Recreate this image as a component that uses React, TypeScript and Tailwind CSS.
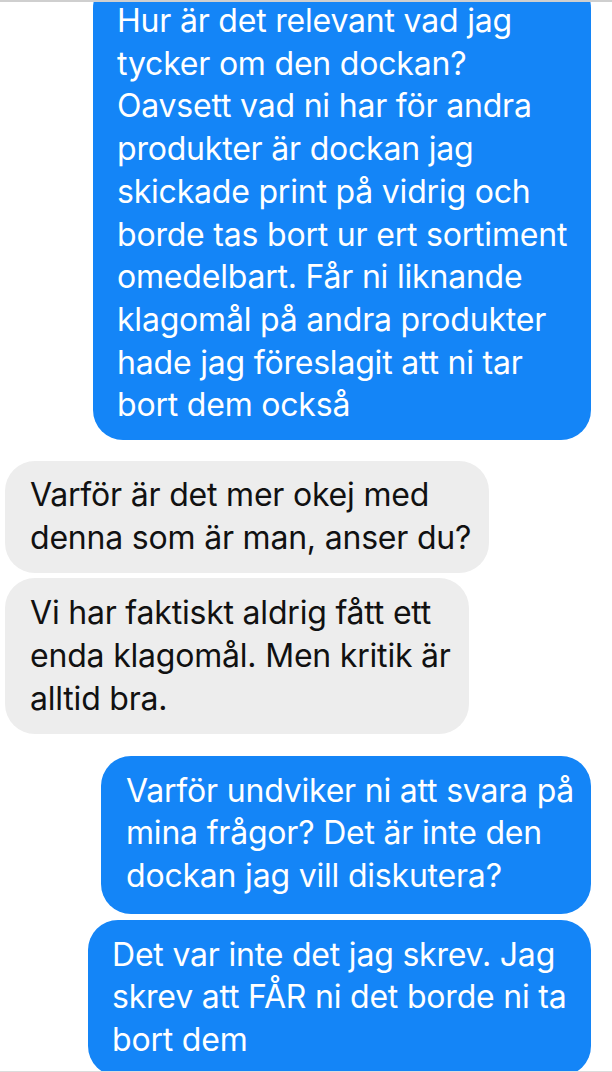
import React from 'react';

type Msg = { from: 'me' | 'them'; lines: string[]; box: string };

const messages: Msg[] = [
  {
    from: 'me',
    box: 'w-[498px] mt-[-24px] pt-[22px] pb-[13px] pl-6',
    lines: [
      'Hur är det relevant vad jag',
      'tycker om den dockan?',
      'Oavsett vad ni har för andra',
      'produkter är dockan jag',
      'skickade print på vidrig och',
      'borde tas bort ur ert sortiment',
      'omedelbart. Får ni liknande',
      'klagomål på andra produkter',
      'hade jag föreslagit att ni tar',
      'bort dem också',
    ],
  },
  {
    from: 'them',
    box: 'w-[484px] mt-[21px] pt-[13px] pb-[14px] pl-[25px]',
    lines: ['Varför är det mer okej med', 'denna som är man, anser du?'],
  },
  {
    from: 'them',
    box: 'w-[464px] mt-[5px] pt-[14px] pb-[13px] pl-[25px]',
    lines: ['Vi har faktiskt aldrig fått ett', 'enda klagomål. Men kritik är', 'alltid bra.'],
  },
  {
    from: 'me',
    box: 'w-[490px] mt-[22px] pt-[14px] pb-[16px] pl-[25px]',
    lines: ['Varför undviker ni att svara på', 'mina frågor? Det är inte den', 'dockan jag vill diskutera?'],
  },
  {
    from: 'me',
    box: 'w-[503px] mt-[6px] pt-[14px] pb-[14px] pl-6',
    lines: ['Det var inte det jag skrev. Jag', 'skrev att FÅR ni det borde ni ta', 'bort dem'],
  },
];

const Bubble = ({ msg }: { msg: Msg }) => {
  const mine = msg.from === 'me';
  return (
    <div className={mine ? 'flex justify-end pr-[21px]' : 'flex justify-start pl-[5px]'}>
      <div
        className={
          (mine ? 'bg-[#1485f7] text-white ' : 'bg-[#ededed] text-[#111111] ') +
          'rounded-[30px] text-[32px] leading-[42.7px] tracking-[-0.2px] ' +
          msg.box
        }
      >
        {msg.lines.map((l, i) => (
          <div key={i} className="whitespace-nowrap">
            {l}
          </div>
        ))}
      </div>
    </div>
  );
};

export default function App() {
  return (
    <div className="w-[612px] h-[1072px] bg-white overflow-hidden flex flex-col font-['Inter','Noto_Sans',sans-serif]">
      <div className="h-[2px] bg-[#cfcfcf] shrink-0 relative z-10" />
      <div className="flex-1 overflow-hidden flex flex-col">
        {messages.map((m, i) => (
          <Bubble key={i} msg={m} />
        ))}
      </div>
      <div className="h-[1px] bg-[#dcdcdc] shrink-0" />
    </div>
  );
}
